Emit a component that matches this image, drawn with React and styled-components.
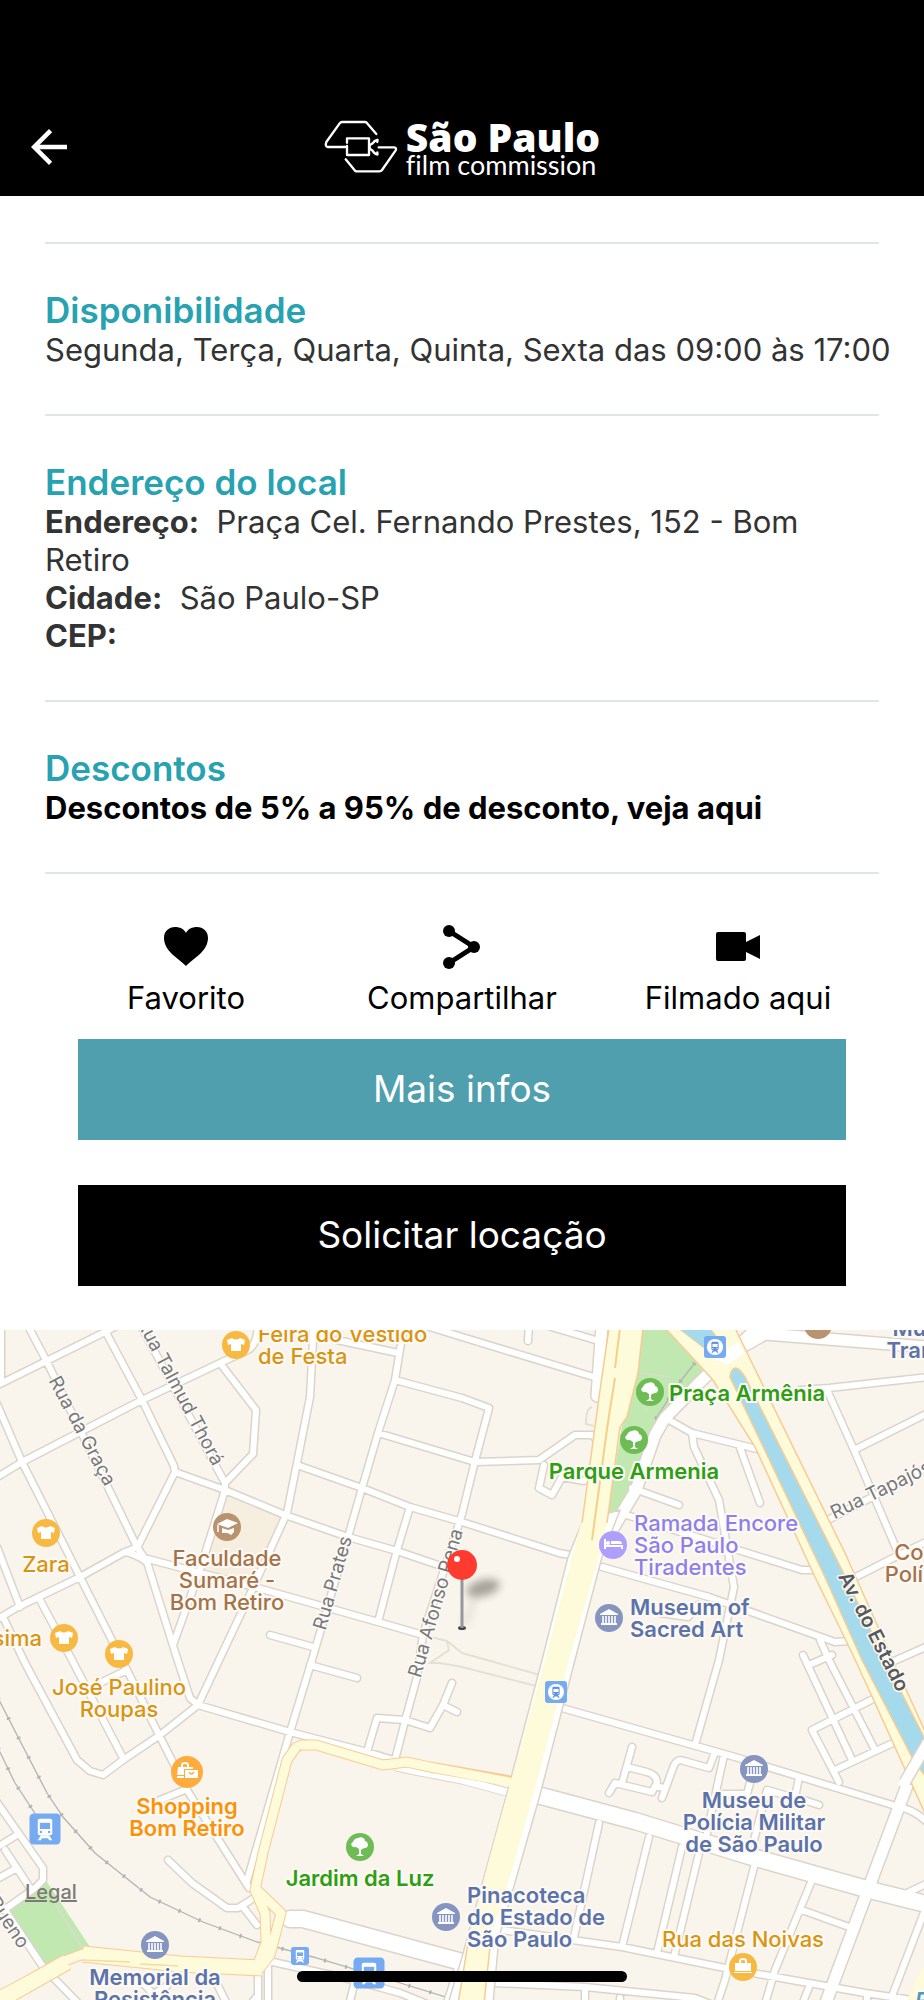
import styled, { createGlobalStyle } from 'styled-components';
import { MdArrowBack } from 'react-icons/md';

const bairro = {
    branco: [
        'M28 -4 L46 30 L137 217 L147 232 L175 322 L190 368 L198 375',
        'M102 -5 L142 70 L174 136 L175 142 L138 216',
        'M1 -5 V50 M-4 56 L105 2 L120 -6',
        'M-3 74 L22 132 L80 247 L127 340 L160 407 L187 460 L249 558',
        'M-4 148 L22 132 L142 70 L220 33 L248 20 Q257 15 258 -5',
        'M220 33 L256 80 L253 124 L225 153 V160',
        'M140 -6 L225 153',
        'M175 142 L225 160 L285 185 L348 207 L397 221 L447 238',
        'M225 160 L200 240 L173 315',
        'M287 183 L297 133 L310 67 L313 10 V-5 M286 185 L252 260 L198 375',
        'M148 229 L197 242 L258 258 L378 292 L423 305',
        'M138 217 L123 223 L80 247 L18 277 L-4 290 M125 222 Q136 224 147 232',
        'M297 135 L362 158 L410 177 L462 192 L559 223 L575 226',
        'M404 -5 L395 50 L378 103 L362 158 L348 207 L312 330 L290 402 L247 551',
        'M395 50 L462 68 L489 78 L475 131 L462 184 L423 305 L417 347 L405 391 L395 430',
        'M378 103 L475 132 L539 130 L575 105 L592 105 L600 113',
        'M410 177 L397 220 L378 292',
        'M270 305 L313 317',
        'M337 10 L398 23 M430 -3 L462 7 L597 48 M529 -6 L528 11 M545 -5 L602 12',
        'M-3 217 L20 277 M3 287 L25 333 L77 430 L90 441 L103 445 L123 430 L160 405 L198 375 L290 402 L367 422 L400 432',
        'M40 270 L72 330 L123 428',
        'M127 340 L100 353 M160 470 L187 459',
        'M168 530 L192 553 L227 578 L238 578 L254 568 M243 577 L257 595',
        'M310 335 L357 348',
        'M367 422 L377 388 L405 390 L430 398 L443 375 L452 353 M443 375 L457 382',
        'M-4 471 L43 538 V550 L35 558 L4 580 M17 505 L-4 518 M5 520 L30 558 M-3 549 L17 538',
        'M-3 568 L43 637 L79 674',
        'M273 632 L353 650 L400 663 L432 676 M355 651 L349 675 M258 638 V675 M268 635 V675 M258 665 L250 675',
        'M143 653 L153 664 L167 656 M215 650 L227 674',
        'M669 90 L692 103 L757 119',
        'M692 103 L694 117 L719 170 L734 257 L719 330 L695 415',
        'M739 115 L760 173 M632 158 L679 175',
        'M620 183 L802 240 H815',
        'M602 237 L709 267 L835 312 L850 311 M660 283 L688 287 L698 275',
        'M820 310 L829 330 L875 420 M803 325 L852 430 M809 335 L832 325 M812 400 L877 367 M812 400 L839 452 M835 440 L895 412',
        'M800 60 L829 58 L928 47',
        'M827 60 L854 120 L899 225 L850 250 M899 225 L928 211 M854 120 L928 83',
        'M822 193 L928 138 M885 335 L928 316',
        'M544 135 L539 158 L552 165 L562 147 L584 151',
        'M562 378 L735 427 L899 477 Q915 480 928 493',
        'M599 493 L574 607 M649 507 L622 617 M682 517 L657 623 M699 523 L674 627',
        'M755 533 L725 650 L717 674 M812 550 L775 640 L765 674 M802 580 L849 597',
        'M928 572 L892 666 M905 564 L928 553',
        'M502 600 L622 617 L725 638 L775 647 L865 663 L912 670',
        'M495 653 L585 657 L695 668 L715 676 M585 657 V675 M809 657 L802 675 M620 668 V675 M867 664 V675',
        'M724 425 L707 503 M715 422 L709 438 L684 431 Q676 428 673 438 L662 468',
        'M632 417 L622 453 M627 437 L647 442 Q657 445 657 453 L652 462 L615 453 L609 463 M655 456 L664 458',
        'M799 447 L795 468 L767 460 L754 510 M795 467 L819 475 M750 453 L747 464 H724',
    ],
    largo: [
        'M762 -6 L739 15 L700 52 L665 88 L655 105 L636 160 L609 205',
        'M728 25 L765 4 L928 17',
        'M602 -5 L597 66',
        'M928 418 L909 450 L869 557 L825 675',
        'M460 640 L449 675',
    ],
};

const pinos = [
    { tipo: 'camisa', x: 236, y: 15, cor: '#f7b941', texto: '#d99512', linhas: ['Feira do Vestido', 'de Festa'], tx: 258, ty: 12, ancora: 'start' },
    { tipo: 'camisa', x: 46, y: 203, cor: '#f7b941', texto: '#d99512', linhas: ['Zara'], tx: 46, ty: 242 },
    { tipo: 'camisa', x: 64, y: 308, cor: '#f7b941', texto: '#d99512', linhas: ['Belíssima'], tx: 42, ty: 316, ancora: 'end' },
    { tipo: 'camisa', x: 119, y: 324, cor: '#f7b941', texto: '#d99512', linhas: ['José Paulino', 'Roupas'], tx: 119, ty: 365 },
    { tipo: 'capelo', x: 227, y: 197, cor: '#b9926f', texto: '#a4734a', linhas: ['Faculdade', 'Sumaré -', 'Bom Retiro'], tx: 227, ty: 236 },
    { tipo: 'compras', x: 187, y: 442, cor: '#ffab3d', texto: '#fb9209', linhas: ['Shopping', 'Bom Retiro'], tx: 187, ty: 484, raio: 16, forte: true },
    { tipo: 'arvore', x: 360, y: 517, cor: '#6dbd54', texto: '#2f9e12', linhas: ['Jardim da Luz'], tx: 360, ty: 556, forte: true },
    { tipo: 'museu', x: 446, y: 587, cor: '#8695c0', texto: '#5c73aa', linhas: ['Pinacoteca', 'do Estado de', 'São Paulo'], tx: 467, ty: 573, ancora: 'start', forte: true },
    { tipo: 'museu', x: 155, y: 615, cor: '#8695c0', texto: '#5c73aa', linhas: ['Memorial da', 'Resistência'], tx: 155, ty: 655, forte: true },
    { tipo: 'arvore', x: 650, y: 62, cor: '#6dbd54', texto: '#2f9e12', linhas: ['Praça Armênia'], tx: 669, ty: 71, ancora: 'start', forte: true },
    { tipo: 'arvore', x: 634, y: 110, cor: '#6dbd54', texto: '#2f9e12', linhas: ['Parque Armenia'], tx: 634, ty: 149, forte: true },
    { tipo: 'cama', x: 613, y: 215, cor: '#ad9ffb', texto: '#8e80ea', linhas: ['Ramada Encore', 'São Paulo', 'Tiradentes'], tx: 634, ty: 201, ancora: 'start' },
    { tipo: 'museu', x: 609, y: 288, cor: '#8695c0', texto: '#5c73aa', linhas: ['Museum of', 'Sacred Art'], tx: 630, ty: 285, ancora: 'start', forte: true },
    { tipo: 'museu', x: 754, y: 439, cor: '#8695c0', texto: '#5c73aa', linhas: ['Museu de', 'Polícia Militar', 'de São Paulo'], tx: 754, ty: 478, forte: true },
    { tipo: 'bolsa', x: 743, y: 637, cor: '#f7b941', texto: '#d99512', linhas: ['Rua das Noivas'], tx: 743, ty: 617 },
    { tipo: 'liso', x: 818, y: -5, cor: '#b9926f', texto: '#5c73aa', linhas: ['Museu dos', 'Transportes'], tx: 951, ty: 6, forte: true },
    { tipo: 'nenhum', texto: '#a4734a', linhas: ['Comando', 'Polícia Civil'], tx: 945, ty: 230 },
];

const ruas = [
    { nome: 'Rua da Graça', x: 82, y: 101, angulo: 62 },
    { nome: 'Rua Talmud Thorá', x: 180, y: 62, angulo: 62 },
    { nome: 'Rua Prates', x: 333, y: 253, angulo: -74 },
    { nome: 'Rua Afonso Pena', x: 436, y: 273, angulo: -74 },
    { nome: 'Rua Tapajós', x: 881, y: 160, angulo: -26 },
    { nome: 'Av. do Estado', x: 873, y: 302, angulo: 63, forte: true },
    { nome: 'R. Bueno', x: 2, y: 583, angulo: 56 },
];

const estacoes = [
    { x: 715, y: 17, lado: 22, metro: true },
    { x: 556, y: 362, lado: 22, metro: true },
    { x: 45, y: 499, lado: 31 },
    { x: 300, y: 626, lado: 18 },
    { x: 369, y: 643, lado: 31 },
];

function Simbolo({ tipo }) {
    switch (tipo) {
        case 'camisa':
            return <path fill="#fff" d="M-9 -5 L-4 -7 Q0 -4 4 -7 L9 -5 L8 0 L5 -1 V6 H-5 V-1 L-8 0Z" />;
        case 'arvore':
            return <path fill="#fff" d="M-1 2 L-4 0 C-9 1 -10 -4 -7 -5 C-6 -8 -4 -9 -2 -9 C1 -11 5 -9 5 -6 C9 -5 9 1 5 1 L2 2 L1 3 L1 7 L4 9 H-4 L-1 7Z" />;
        case 'museu':
            return (
                <g fill="#fff">
                    <path d="M0 -9 L9 -4 V-3 H-9 V-4Z" />
                    <path d="M-6 -2 V5 M-3 -2 V5 M0 -2 V5 M3 -2 V5 M6 -2 V5" stroke="#fff" strokeWidth="1.6" />
                    <path d="M-8 5 H8 V7 H-8Z" />
                </g>
            );
        case 'capelo':
            return (
                <g fill="#fff">
                    <path d="M-10 -3 L0 -8 L11 -4 L1 1Z M-5 1 L1 3 L7 1 V5 L4 8 Q1 5 -5 6Z" />
                    <path d="M-9 -2 V5" stroke="#fff" strokeWidth="1.5" />
                </g>
            );
        case 'cama':
            return (
                <g fill="none" stroke="#fff" strokeWidth="2">
                    <path d="M-8 -6 V4 M-8 1 H9 V4" />
                    <path d="M-2 -4 H6 Q9 -4 9 -1 H-2Z" fill="#fff" stroke="none" />
                    <circle cx="-5" cy="-2" r="1" />
                </g>
            );
        case 'bolsa':
            return (
                <g fill="#fff">
                    <path d="M-8 -4 H8 V4 H-8Z M-9 5 H9 V6 H-9Z" />
                    <path d="M-3 -4 V-6 Q-3 -8 0 -8 Q3 -8 3 -6 V-4" fill="none" stroke="#fff" strokeWidth="2" />
                </g>
            );
        case 'compras':
            return (
                <g fill="#fff">
                    <path d="M-9 -5 H6 V-3 H-3 V3 H-10Z M-10 4 H-3 V6 H-10Z M-2 -2 H11 V6 H-2Z" />
                    <path d="M-5 -5 V-7 Q-5 -9 -2 -9 Q1 -9 1 -7 V-5" fill="none" stroke="#fff" strokeWidth="2" />
                    <path d="M2 0 Q4 4 7 0" fill="none" stroke="#ffab3d" strokeWidth="1.5" />
                </g>
            );
        default:
            return null;
    }
}

function Pino({ pino }) {
    return (
        <g>
            {pino.cor && (
                <g transform={`translate(${pino.x} ${pino.y})`}>
                    <circle r={pino.raio || 14} fill={pino.cor} />
                    <Simbolo tipo={pino.tipo} />
                </g>
            )}
            <Rotulo fill={pino.texto} $forte={pino.forte} textAnchor={pino.ancora || 'middle'}>
                {pino.linhas.map((linha, i) => (
                    <tspan key={linha} x={pino.tx} y={pino.ty + i * 22}>{linha}</tspan>
                ))}
            </Rotulo>
        </g>
    );
}

function Estacao({ x, y, lado, metro }) {
    return (
        <g transform={`translate(${x} ${y}) scale(${lado / 30})`}>
            <rect x="-15" y="-15" width="30" height="30" rx="4" fill="#77abf1" />
            {metro && <circle r="11" fill="#fff" />}
            <g transform={metro ? 'scale(.7)' : undefined} fill={metro ? '#5b93e6' : '#fff'}>
                <path d="M-5 -10 H5 Q7 -10 7 -8 V4 Q7 6 5 6 H-5 Q-7 6 -7 4 V-8 Q-7 -10 -5 -10Z" />
                <path d="M-4 6 L-7 11 H-4 L-3 9 H3 L4 11 H7 L4 6Z" />
                <path d="M-5 -6 H5 V0 H-5Z" fill={metro ? '#fff' : '#77abf1'} />
                <circle cx="-4" cy="3" r="1.2" fill={metro ? '#fff' : '#77abf1'} />
                <circle cx="4" cy="3" r="1.2" fill={metro ? '#fff' : '#77abf1'} />
            </g>
        </g>
    );
}

function MapaDoLocal() {
    return (
        <Mapa viewBox="0 0 924 670" role="img" aria-label="Mapa do local">
            <defs>
                <filter id="sombra" x="-50%" y="-50%" width="200%" height="200%">
                    <feGaussianBlur stdDeviation="4" />
                </filter>
            </defs>
            <rect width="924" height="670" fill="#f9f5ed" />
            <path d="M227 165 L284 187 L255 257 L200 242Z" fill="#f6eedf" />
            <path d="M640 -2 H668 L704 42 L655 100 L629 160 L604 205 L622 95 L637 43Z M5 582 L47 552 L92 620 L42 640Z" fill="#c1e8b0" />
            <path d="M48 562 L82 618 M640 43 L671 47 M640 68 L648 82" stroke="#d8ddce" strokeWidth="1.5" fill="none" />
            <path d="M423 305 L447 311 L462 323 L540 345 M447 311 L449 320 L430 333 H440 L462 337 L540 357 M592 77 Q586 78 586 94 L594 96" stroke="#e3e2d2" strokeWidth="2" fill="none" />

            {/* trilhos */}
            <g fill="none" stroke="#b3b3b3">
                <path d="M-2 368 L17 405 L47 463 L63 487 L95 523 L150 567 L203 592 L257 612 L313 627 L397 652 L462 672 M-2 418 L15 453 L38 488 M695 33 L679 53 L655 90" strokeWidth="1.3" />
                <path d="M-2 368 L17 405 L47 463 L63 487 L95 523 L150 567 L203 592 L257 612 L313 627 L397 652 L462 672 M-2 418 L15 453 L38 488 M695 33 L679 53 L655 90" strokeWidth="4" strokeDasharray="2 20" />
            </g>

            {/* ruas: contorno e depois o asfalto */}
            <g fill="none" strokeLinejoin="round" strokeLinecap="round">
                <path d={bairro.branco.join(' ')} stroke="#dbd4ca" strokeWidth="9" />
                <path d={bairro.largo.join(' ')} stroke="#dbd4ca" strokeWidth="14" />
                <path d="M290 589 H303 L447 628 L470 634 M530 463 L635 491 L749 526 L870 560 L930 575" stroke="#dbd4ca" strokeWidth="19" />
                <path d={bairro.branco.join(' ')} stroke="#fff" strokeWidth="6" />
                <path d={bairro.largo.join(' ')} stroke="#fff" strokeWidth="11" />
                <path d="M290 589 H303 L447 628 L470 634 M530 463 L635 491 L749 526 L870 560 L930 575" stroke="#fff" strokeWidth="16" />
                <path d="M397 437 L415 441 L462 450 L510 463" stroke="#dbd4ca" strokeWidth="9" />
                <path d="M397 437 L415 441 L462 450 L510 463" stroke="#fff" strokeWidth="7" />
            </g>

            {/* rio e avenidas */}
            <path d="M583 190 L568 227 L542 330 L507 463 L462 627 L448 674 H493 L499 607 L512 563 L540 465 L575 330 L602 227 L620 180Z" fill="#fff" stroke="#dbd4ca" strokeWidth="1.5" />
            <path d="M295 418 L302 415 H316 L383 435 L407 432 L430 437 L516 452" fill="none" stroke="#f8cb93" strokeWidth="11" />
            <path d="M609 -2 L599 67 L581 193 L545 330 L514 440 L489 530 L469 607 L458 674 H484 L491 607 L515 530 L540 440 L569 330 L599 227 L607 193 L620 97 L627 87 L638 43 L643 -2Z" fill="#fdfbda" />
            <path d="M609 -2 L599 67 L582 193 M607 193 L620 97 L627 87 L638 43 L643 -2 M469 607 L458 674 M484 674 L490 617" fill="none" stroke="#f8cb93" strokeWidth="1.5" />
            <path d="M620 -2 L615 38 M615 48 L608 92 L592 210" fill="none" stroke="#f5cf8c" strokeWidth="2" />
            <path d="M295 418 L302 415 H316 L383 435 L407 432 L430 437 L520 454" fill="none" stroke="#fdfbda" strokeWidth="9" />
            <g fill="none" strokeLinejoin="round">
                <path d="M297 416 L287 430 L263 523 L255 560 L265 583 L266 613 L258 634 M257 560 L281 583 L270 625 L260 638 L180 634 L83 624 L67 630 L-5 668" stroke="#f8cb93" strokeWidth="11" />
                <path d="M83 624 L180 634 L262 638 M67 632 L-5 673" stroke="#f8cb93" strokeWidth="17" />
                <path d="M297 416 L287 430 L263 523 L255 560 L265 583 L266 613 L258 634 M257 560 L281 583 L270 625 L260 638 L180 634 L83 624 L67 630 L-5 668" stroke="#fdfbda" strokeWidth="9" />
                <path d="M83 624 L180 634 L262 638 M67 632 L-5 673" stroke="#fdfbda" strokeWidth="15" />
                <path d="M82 630 L130 632 M140 634 L178 636" stroke="#f8d9a2" strokeWidth="1.5" />
            </g>
            <path d="M665 -2 L713 50 L755 117 L815 247 L852 323 L875 373 L928 490 V408 L895 335 L845 223 L752 33 L735 -2Z" fill="#fdfbda" stroke="#f8cb93" strokeWidth="1.5" />
            <path d="M678 -2 H710 L728 22 L718 24 L704 18Z" fill="#a5daec" stroke="#f8cb93" />
            <path d="M704 20 L716 30 L728 34 L745 23 L738 12 L722 22Z" fill="#fff" />
            <path d="M730 47 Q731 38 736 38 Q740 39 745 47 L842 240 L885 330 L928 415 V450 L914 431 L862 330 L825 247Z" fill="#a5daec" stroke="#f8cb93" strokeWidth="1.5" />
            <path d="M928 412 L905 452" stroke="#dbd4ca" strokeWidth="13" />
            <path d="M928 412 L902 457" stroke="#fff" strokeWidth="10" />
            <path d="M928 640 L912 674" stroke="#fdfbda" strokeWidth="12" />

            {estacoes.map((e) => <Estacao key={`${e.x}-${e.y}`} {...e} />)}
            {ruas.map((rua) => (
                <NomeDeRua key={rua.nome} $forte={rua.forte} transform={`translate(${rua.x} ${rua.y}) rotate(${rua.angulo})`} dy="6">
                    {rua.nome}
                </NomeDeRua>
            ))}
            {pinos.map((pino) => <Pino key={pino.linhas[0]} pino={pino} />)}
            <a href="#legal"><Legal x="25" y="569">Legal</Legal></a>
            <Rotulo x="915" y="678" fill="#4d9eb5" fontStyle="italic" $forte>R</Rotulo>

            {/* alfinete */}
            <ellipse cx="483" cy="258" rx="17" ry="8" transform="rotate(-15 483 258)" fill="#77736b" opacity=".65" filter="url(#sombra)" />
            <path d="M464 296 L475 267" stroke="#77736b" strokeWidth="5" opacity=".2" filter="url(#sombra)" />
            <ellipse cx="462" cy="298" rx="4" ry="2" fill="#444" />
            <path d="M462 248 V298" stroke="#94979b" strokeWidth="3" />
            <circle cx="462" cy="235" r="15" fill="#ff3b30" />
            <circle cx="457" cy="229" r="3" fill="#fff" />
        </Mapa>
    );
}

function App() {
    return (
        <Pagina>
            <EstiloGlobal />
            <Cabecalho>
                <Voltar type="button" aria-label="Voltar"><MdArrowBack size={54} /></Voltar>
                <Marca>
                    <svg width="74" height="54" viewBox="48 34 222 162" fill="none" stroke="#fff" strokeWidth="7" strokeLinecap="round" strokeLinejoin="round">
                        <path d="M205 76 L176 42 Q174 40 170 40 H102 Q98 40 95 44 L55 100 Q50 114 60 115 H113" />
                        <path d="M117 102 V89 H183 V139 H117 V112" />
                        <path d="M208 94 Q199 96 194 104 L185 110 V120 L194 126 Q199 136 208 137" />
                        <path d="M208 94 V100 M208 131 V137" />
                        <path d="M212 116 H258 Q267 117 263 125 L222 184 Q219 188 214 188 H146 Q142 188 140 185 L113 152" />
                    </svg>
                    <MarcaTexto>
                        <MarcaNome>São Paulo</MarcaNome>
                        <MarcaSub>film commission</MarcaSub>
                    </MarcaTexto>
                </Marca>
            </Cabecalho>

            <Conteudo>
                <Secao>
                    <Titulo>Disponibilidade</Titulo>
                    <Texto>Segunda, Terça, Quarta, Quinta, Sexta das 09:00 às 17:00</Texto>
                </Secao>
                <Secao>
                    <Titulo>Endereço do local</Titulo>
                    <Texto><strong>Endereço:</strong>&nbsp; Praça Cel. Fernando Prestes, 152 - Bom<br />Retiro</Texto>
                    <Texto><strong>Cidade:</strong>&nbsp; São Paulo-SP</Texto>
                    <Texto><strong>CEP:</strong></Texto>
                </Secao>
                <Secao>
                    <Titulo>Descontos</Titulo>
                    <LinkDesconto href="#descontos">Descontos de 5% a 95% de desconto, veja aqui</LinkDesconto>
                </Secao>
            </Conteudo>

            <Acoes>
                <Acao type="button">
                    <svg width="44" height="46" viewBox="0 0 44 46">
                        <path d="M22 42 C14 34 0 27 0 14 C0 7 5 3 11 3 C16 3 20 5 22 9 C24 5 28 3 33 3 C39 3 44 7 44 14 C44 27 30 34 22 42Z" />
                    </svg>
                    Favorito
                </Acao>
                <Acao type="button">
                    <svg width="38" height="46" viewBox="0 0 38 46">
                        <path d="M6 7 L31 23 L6 39" fill="none" stroke="#000" strokeWidth="5" />
                        <circle cx="6" cy="7" r="6" />
                        <circle cx="31" cy="23" r="6" />
                        <circle cx="6" cy="39" r="6" />
                    </svg>
                    Compartilhar
                </Acao>
                <Acao type="button">
                    <svg width="44" height="46" viewBox="0 0 44 46">
                        <path d="M2 8 H28 Q30 8 30 10 V18 L44 11 V35 L30 28 V35 Q30 37 28 37 H2 Q0 37 0 35 V10 Q0 8 2 8Z" />
                    </svg>
                    Filmado aqui
                </Acao>
            </Acoes>

            <Botoes>
                <Botao type="button" $cor="#4f9fae">Mais infos</Botao>
                <Botao type="button" $cor="#000">Solicitar locação</Botao>
            </Botoes>

            <AreaMapa>
                <MapaDoLocal />
                <IndicadorInicio />
            </AreaMapa>
        </Pagina>
    );
}

export default App

const EstiloGlobal = createGlobalStyle`
    * {
        box-sizing: border-box;
    }
    body {
        margin: 0;
        background: #fff;
        font-family: Inter, "Liberation Sans", sans-serif;
    }
    button {
        font-family: inherit;
        border: 0;
        padding: 0;
        cursor: pointer;
    }
`

const Pagina = styled.main`
    width: 100%;
`

const Cabecalho = styled.header`
    display: grid;
    grid-template-columns: 1fr auto 1fr;
    align-items: center;
    background: #000;
    color: #fff;
    padding: 112px 22px 14px;
`

const Voltar = styled.button`
    display: flex;
    justify-self: start;
    background: none;
    color: inherit;
`

const Marca = styled.div`
    display: flex;
    align-items: center;
    gap: 8px;
    height: 70px;
`

const MarcaTexto = styled.div`
    display: flex;
    flex-direction: column;
    padding-top: 3px;
`

const MarcaNome = styled.span`
    font-family: "Open Sans", sans-serif;
    font-size: 39px;
    font-weight: 800;
    line-height: 32px;
`

const MarcaSub = styled.span`
    font-family: Lato, sans-serif;
    font-size: 27px;
    font-variant-ligatures: none;
    line-height: 24px;
`

const Conteudo = styled.div`
    padding: 46px 45px 0;
`

const Secao = styled.section`
    border-top: 2px solid #dfe5eb;
    padding: 45px 0;

    &:last-child {
        border-bottom: 2px solid #dfe5eb;
    }
`

const Titulo = styled.h2`
    margin: 0;
    font-size: 35px;
    font-weight: 600;
    line-height: 42px;
    color: #27a2b1;
`

// o texto pode avançar um pouco sobre a margem direita antes de quebrar
const Texto = styled.p`
    margin: 0 -16px 0 0;
    font-size: 31px;
    line-height: 38px;
    color: #333;

    strong {
        font-weight: 700;
    }
`

const LinkDesconto = styled.a`
    display: block;
    font-size: 31px;
    font-weight: 700;
    line-height: 38px;
    color: #000;
    text-decoration: none;
`

const Acoes = styled.div`
    display: grid;
    grid-template-columns: repeat(3, 1fr);
    padding: 50px 48px 22px;
`

const Acao = styled.button`
    display: flex;
    flex-direction: column;
    align-items: center;
    gap: 8px;
    background: none;
    color: #000;
    font-size: 31px;
    line-height: 39px;
`

const Botoes = styled.div`
    display: flex;
    flex-direction: column;
    gap: 45px;
    padding: 0 78px 44px;
`

const Botao = styled.button`
    background: ${({ $cor }) => $cor};
    color: #fff;
    font-size: 37px;
    line-height: 42px;
    padding: 29px 0 30px;
`

const AreaMapa = styled.div`
    position: relative;
    overflow: hidden;
`

const Mapa = styled.svg`
    display: block;
    width: 100%;
    height: auto;
    font-family: Inter, "Liberation Sans", sans-serif;
`

const Rotulo = styled.text`
    font-size: 22px;
    font-weight: ${({ $forte }) => ($forte ? 600 : 500)};
    paint-order: stroke;
    stroke: #fdfaf5;
    stroke-width: 4px;
    stroke-linejoin: round;
`

const NomeDeRua = styled.text`
    font-size: ${({ $forte }) => ($forte ? 20 : 19)}px;
    font-weight: ${({ $forte }) => ($forte ? 600 : 400)};
    fill: ${({ $forte }) => ($forte ? '#58595b' : '#77787b')};
    text-anchor: middle;
    paint-order: stroke;
    stroke: #fdfaf5;
    stroke-width: 3px;
    stroke-linejoin: round;
`

const Legal = styled.text`
    font-size: 20px;
    font-weight: 500;
    fill: #7d7a76;
    text-decoration: underline;
`

const IndicadorInicio = styled.div`
    position: absolute;
    bottom: 18px;
    left: 50%;
    width: 330px;
    height: 11px;
    border-radius: 6px;
    background: #000;
    transform: translateX(-50%);
`
